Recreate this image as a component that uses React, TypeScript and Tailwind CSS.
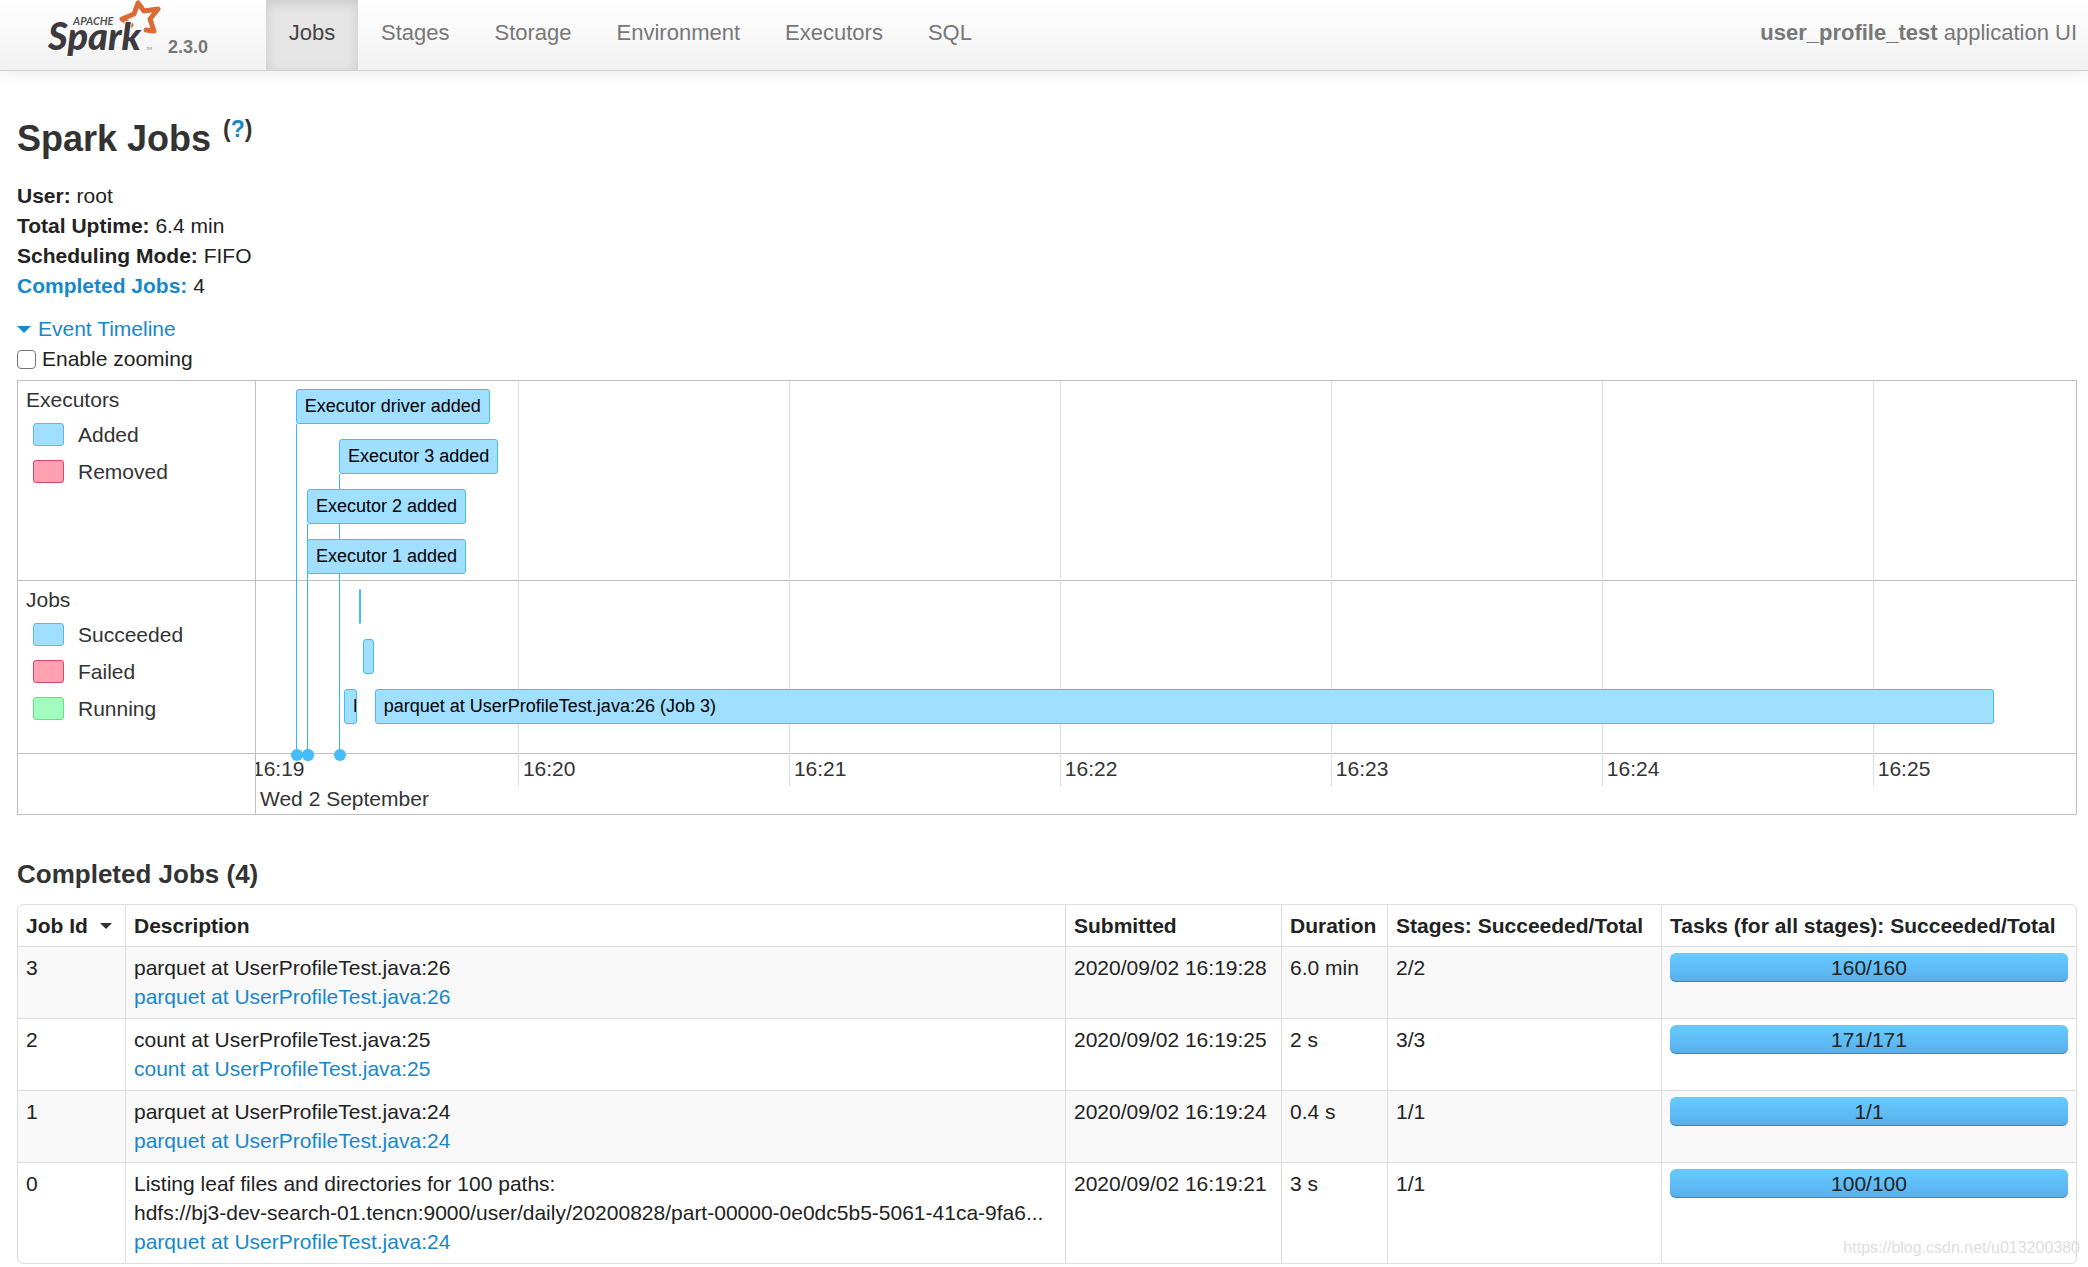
type ExecutorEvent = { name: string; at: number };
type JobEvent = { label: string; from: number; to: number };
type Job = {
  id: number;
  description: string[];
  link: string;
  submitted: string;
  duration: string;
  stages: string;
  tasks: string;
};

// seconds after 16:19:00
const WINDOW_START = 2;
const WINDOW_LENGTH = 403;

const executors: ExecutorEvent[] = [
  { name: "Executor driver added", at: 10.8 },
  { name: "Executor 3 added", at: 20.4 },
  { name: "Executor 2 added", at: 13.3 },
  { name: "Executor 1 added", at: 13.3 }
];

const jobRows: JobEvent[][] = [
  [{ label: "", from: 24.7, to: 25.3 }],
  [{ label: "", from: 25.8, to: 28.1 }],
  [
    { label: "Li", from: 21.5, to: 24.3 },
    { label: "parquet at UserProfileTest.java:26 (Job 3)", from: 28.3, to: 386.8 }
  ]
];

const ticks = [
  { label: "16:20", at: 60 },
  { label: "16:21", at: 120 },
  { label: "16:22", at: 180 },
  { label: "16:23", at: 240 },
  { label: "16:24", at: 300 },
  { label: "16:25", at: 360 }
];

const jobs: Job[] = [
  {
    id: 3,
    description: ["parquet at UserProfileTest.java:26"],
    link: "parquet at UserProfileTest.java:26",
    submitted: "2020/09/02 16:19:28",
    duration: "6.0 min",
    stages: "2/2",
    tasks: "160/160"
  },
  {
    id: 2,
    description: ["count at UserProfileTest.java:25"],
    link: "count at UserProfileTest.java:25",
    submitted: "2020/09/02 16:19:25",
    duration: "2 s",
    stages: "3/3",
    tasks: "171/171"
  },
  {
    id: 1,
    description: ["parquet at UserProfileTest.java:24"],
    link: "parquet at UserProfileTest.java:24",
    submitted: "2020/09/02 16:19:24",
    duration: "0.4 s",
    stages: "1/1",
    tasks: "1/1"
  },
  {
    id: 0,
    description: [
      "Listing leaf files and directories for 100 paths:",
      "hdfs://bj3-dev-search-01.tencn:9000/user/daily/20200828/part-00000-0e0dc5b5-5061-41ca-9fa6..."
    ],
    link: "parquet at UserProfileTest.java:24",
    submitted: "2020/09/02 16:19:21",
    duration: "3 s",
    stages: "1/1",
    tasks: "100/100"
  }
];

const tabs = ["Jobs", "Stages", "Storage", "Environment", "Executors", "SQL"];

const pct = (seconds: number) => `${(seconds / WINDOW_LENGTH) * 100}%`;
const leftOf = (at: number) => pct(at - WINDOW_START);

function SparkLogo() {
  return (
    <svg width="116" height="60" viewBox="0 0 116 60" role="img" aria-label="Apache Spark">
      <path
        d="M98 30 L106 31 L102 19 L110 9 L96 11 L90 3 L86 14 L74 19 L83 25"
        fill="none"
        stroke="#dc6a35"
        strokeWidth="5"
        strokeLinejoin="round"
        strokeLinecap="round"
      />
      <text
        x="0"
        y="50"
        fontFamily="Lato"
        fontSize="38"
        fontWeight="900"
        fontStyle="italic"
        fill="#3c3a3e"
        stroke="#fafafa"
        strokeWidth="2"
        paintOrder="stroke"
      >
        Spark
      </text>
      <text x="25" y="25" fontFamily="Lato" fontSize="11" fontWeight="700" fontStyle="italic" fill="#555">
        APACHE
      </text>
      <text x="98" y="50" fontFamily="Lato" fontSize="4" fill="#777">
        TM
      </text>
    </svg>
  );
}

function Navbar() {
  return (
    <nav className="flex justify-between border-b border-[#d0d0d0] bg-linear-to-b from-white to-[#f1f1f1] text-[22px] leading-[30px] text-[#777] shadow-[0_1px_15px_rgba(0,0,0,0.1)]">
      <div className="flex">
        <a href="#" className="flex w-[266px] pl-12">
          <SparkLogo />
          <span className="pt-[33px] pl-1 text-lg font-bold">2.3.0</span>
        </a>
        <ul className="flex gap-px">
          {tabs.map((tab, i) => (
            <li key={tab}>
              <a
                href="#"
                className={
                  i === 0
                    ? "block min-w-[92px] bg-[#e5e5e5] px-[22px] pt-[18px] pb-[22px] text-center text-[#444] shadow-[inset_0_3px_12px_rgba(0,0,0,0.125)]"
                    : "block px-[22px] pt-[18px] pb-[22px]"
                }
              >
                {tab}
              </a>
            </li>
          ))}
        </ul>
      </div>
      <p className="pt-[18px] pr-[11px]">
        <strong>user_profile_test</strong> application UI
      </p>
    </nav>
  );
}

function Summary() {
  return (
    <ul className="leading-[30px]">
      <li>
        <strong>User:</strong> root
      </li>
      <li>
        <strong>Total Uptime:</strong> 6.4 min
      </li>
      <li>
        <strong>Scheduling Mode:</strong> FIFO
      </li>
      <li>
        <a href="#completed" className="font-bold text-[#1688ca]">
          Completed Jobs:
        </a>{" "}
        4
      </li>
    </ul>
  );
}

function Legend({ title, entries }: { title: string; entries: { label: string; swatch: string }[] }) {
  return (
    <div className="pt-1 pl-2">
      <div className="leading-[29px]">{title}</div>
      <ul className="flex flex-col gap-2 pt-1.5 pl-[7px]">
        {entries.map(e => (
          <li key={e.label} className="flex items-center gap-3.5 leading-[29px]">
            <span className={`h-[23px] w-[31px] rounded-[3px] border ${e.swatch}`} />
            {e.label}
          </li>
        ))}
      </ul>
    </div>
  );
}

const BLUE = "border-[#5fb9e8] bg-[#a0dfff]";
const RED = "border-[#dd4466] bg-[#ffa1b0]";
const GREEN = "border-[#5ce282] bg-[#a2fcc0]";
const ITEM = "absolute h-[35px] overflow-hidden rounded-[3px] border border-[#3ec0ff] bg-[#a0dfff] text-lg leading-[33px] whitespace-nowrap text-black";

const itemTop = ["top-2", "top-[58px]", "top-[108px]", "top-[158px]"];
const stemTop = ["top-[43px]", "top-[93px]", "top-[143px]", "top-[193px]"];

function Timeline() {
  return (
    <div className="grid grid-cols-[238px_1fr] border border-[#bfbfbf] text-[#333]">
      <div className="border-r border-[#bfbfbf]">
        <div className="h-[200px] border-b border-[#bfbfbf]">
          <Legend
            title="Executors"
            entries={[
              { label: "Added", swatch: BLUE },
              { label: "Removed", swatch: RED }
            ]}
          />
        </div>
        <div className="h-[173px] border-b border-[#bfbfbf]">
          <Legend
            title="Jobs"
            entries={[
              { label: "Succeeded", swatch: BLUE },
              { label: "Failed", swatch: RED },
              { label: "Running", swatch: GREEN }
            ]}
          />
        </div>
      </div>

      <div className="relative h-[433px] overflow-hidden">
        {ticks.map(t => (
          <div
            key={t.label}
            className="absolute top-0 flex h-[405px] items-end border-l border-[#e0e0e0] pb-[3px] pl-1 leading-[29px]"
            style={{ left: leftOf(t.at) }}
          >
            {t.label}
          </div>
        ))}
        <div className="h-[200px] border-b border-[#bfbfbf]" />
        <div className="h-[173px] border-b border-[#bfbfbf]" />
        <div className="-ml-1 leading-[30px]">16:19</div>
        <div className="pl-1 leading-[30px]">Wed 2 September</div>

        {executors.map((e, i) => (
          <div
            key={e.name}
            className={`absolute bottom-[60px] border-l border-[#2fb8fa] ${stemTop[i]}`}
            style={{ left: leftOf(e.at) }}
          >
            <span className="absolute -bottom-[7px] -left-[6px] size-3 rounded-full bg-[#46bdfb]" />
          </div>
        ))}
        {executors.map((e, i) => (
          <div key={e.name} className={`${ITEM} ${itemTop[i]} px-2`} style={{ left: leftOf(e.at) }}>
            {e.name}
          </div>
        ))}

        <div className="absolute inset-x-0 top-[200px]">
          {jobRows.map((row, i) =>
            row.map(j => (
              <div
                key={j.from}
                className={`${ITEM} ${itemTop[i]}`}
                style={{ left: leftOf(j.from), width: pct(j.to - j.from) }}
              >
                {j.label && <span className="pl-2">{j.label}</span>}
              </div>
            ))
          )}
        </div>
      </div>
    </div>
  );
}

function JobsTable() {
  const head = "border-l border-[#ddd] px-2 py-1.5 text-left font-bold whitespace-nowrap";
  const cell = "border-t border-l border-[#ddd] px-2 pt-1.5 pb-[7px]";

  return (
    <div className="overflow-hidden rounded-md border border-[#ddd]">
      <table className="w-full table-fixed border-separate border-spacing-0 leading-[29px]">
        <colgroup>
          <col className="w-[107px]" />
          <col />
          <col className="w-[216px]" />
          <col className="w-[106px]" />
          <col className="w-[274px]" />
          <col className="w-[415px]" />
        </colgroup>
        <thead>
          <tr>
            <th className="px-2 py-1.5 text-left font-bold whitespace-nowrap">
              <span className="flex items-center gap-3">
                Job Id
                <svg width="12" height="6" viewBox="0 0 12 6" aria-hidden="true">
                  <path d="M0 0h12L6 6z" fill="#333" />
                </svg>
              </span>
            </th>
            <th className={head}>Description</th>
            <th className={head}>Submitted</th>
            <th className={head}>Duration</th>
            <th className={head}>Stages: Succeeded/Total</th>
            <th className={head}>Tasks (for all stages): Succeeded/Total</th>
          </tr>
        </thead>
        <tbody>
          {jobs.map(job => (
            <tr key={job.id} className="align-top odd:bg-[#f8f8f8]">
              <td className="border-t border-[#ddd] px-2 pt-1.5 pb-[7px]">{job.id}</td>
              <td className={cell}>
                {job.description.map(line => (
                  <div key={line} className="whitespace-nowrap">
                    {line}
                  </div>
                ))}
                <a href="#" className="block text-[#1688ca]">
                  {job.link}
                </a>
              </td>
              <td className={`${cell} whitespace-nowrap`}>{job.submitted}</td>
              <td className={cell}>{job.duration}</td>
              <td className={cell}>{job.stages}</td>
              <td className={cell}>
                <div className="rounded-md bg-linear-to-b from-[#66ccff] to-[#58aeec] text-center shadow-[inset_0_-1px_0_rgba(0,80,160,0.4)]">
                  {job.tasks}
                </div>
              </td>
            </tr>
          ))}
        </tbody>
      </table>
    </div>
  );
}

export default function App() {
  return (
    <div className="relative bg-white font-['Liberation_Sans',Arial,sans-serif] text-[21px] text-[#222]">
      <Navbar />

      <main className="pr-[11px] pl-[17px]">
        <h1 className="flex items-start pt-[45px] text-4xl leading-[46px] font-bold text-[#333]">
          Spark Jobs
          <sup className="top-0 pl-3 text-[23px] leading-[26px]">
            (
            <a href="#" className="text-[#1688ca]">
              ?
            </a>
            )
          </sup>
        </h1>

        <div className="pt-[19px]">
          <Summary />
        </div>

        <a href="#timeline" className="mt-[13px] flex items-center gap-[7px] leading-[30px] text-[#1688ca]">
          <svg width="14" height="7" viewBox="0 0 14 7" aria-hidden="true">
            <path d="M0 0h14L7 7z" fill="currentColor" />
          </svg>
          Event Timeline
        </a>
        <div className="flex items-center gap-1.5 pb-1.5 leading-[30px]">
          <input
            id="zoom"
            type="checkbox"
            className="size-[19px] appearance-none rounded-[4px] border border-[#767676] bg-white"
          />
          <label htmlFor="zoom">Enable zooming</label>
        </div>

        <Timeline />

        <h2 id="completed" className="pt-[43px] pb-[14px] text-[26px] leading-8 font-bold text-[#333]">
          Completed Jobs (4)
        </h2>
        <JobsTable />
      </main>

      <div className="pointer-events-none absolute right-2 bottom-1 text-base text-[#dedede]">
        https://blog.csdn.net/u013200380
      </div>
    </div>
  );
}
